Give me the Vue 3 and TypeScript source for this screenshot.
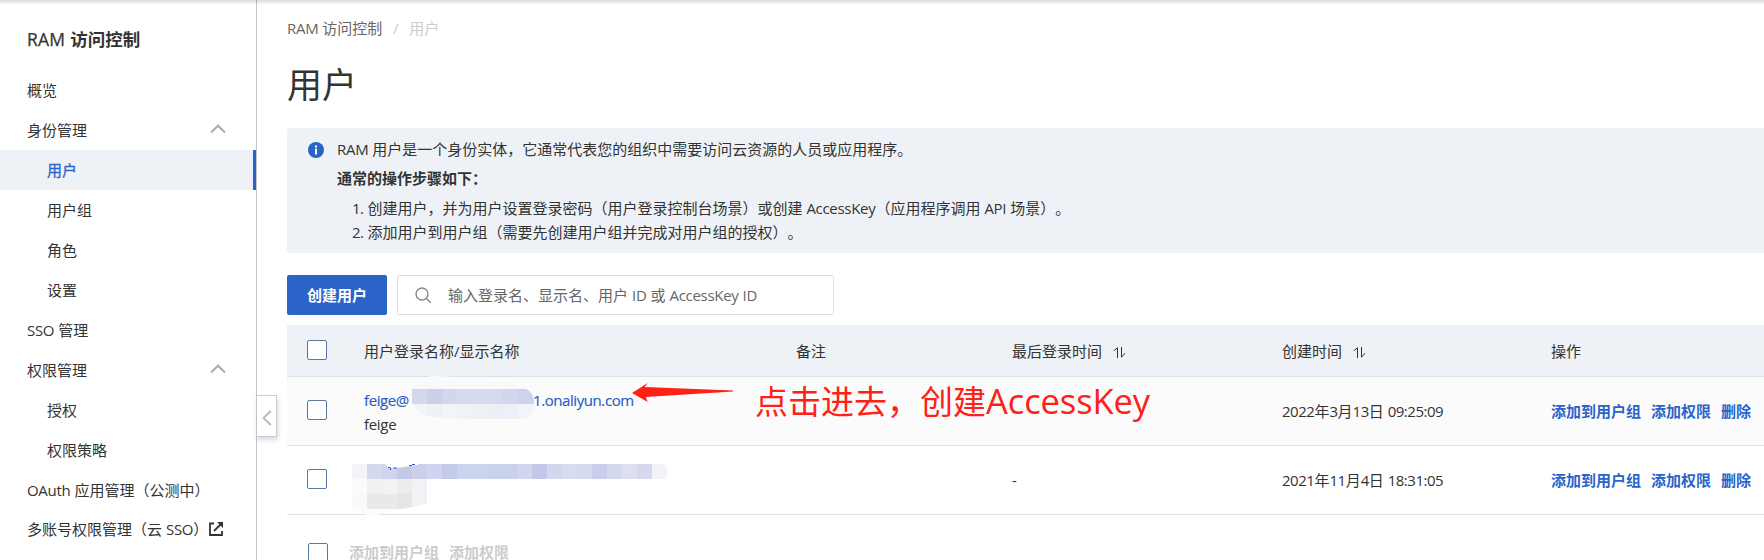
<script setup lang="ts">
import { h } from 'vue'

interface NavItem { label: string; kind: 'top' | 'sub'; open?: boolean; active?: boolean; external?: boolean }
interface Block { x: number; y: number; w: number; h: number; c: string }

const nav: NavItem[] = [
  { label: '概览', kind: 'top' },
  { label: '身份管理', kind: 'top', open: true },
  { label: '用户', kind: 'sub', active: true },
  { label: '用户组', kind: 'sub' },
  { label: '角色', kind: 'sub' },
  { label: '设置', kind: 'sub' },
  { label: 'SSO 管理', kind: 'top' },
  { label: '权限管理', kind: 'top', open: true },
  { label: '授权', kind: 'sub' },
  { label: '权限策略', kind: 'sub' },
  { label: 'OAuth 应用管理（公测中）', kind: 'top' },
  { label: '多账号权限管理（云 SSO）', kind: 'top', external: true },
]

const steps = [
  '创建用户，并为用户设置登录密码（用户登录控制台场景）或创建 AccessKey（应用程序调用 API 场景）。',
  '添加用户到用户组（需要先创建用户组并完成对用户组的授权）。',
]

const rows = [
  { masked: false, last: '-', created: '2022年3月13日 09:25:09' },
  { masked: true, last: '-', created: '2021年11月4日 18:31:05' },
]
const actions = ['添加到用户组', '添加权限', '删除']

const strip = (x: number, y: number, colors: string[]): Block[] =>
  colors.map((c, i) => ({ x: x + i * 15, y, w: 15, h: 15, c }))

const maskA: Block[] = [
  ...strip(0, 13, ['#d3d8ec', '#cbd0ea', '#d2d7ec', '#d5daee', '#d6daee', '#d6daee', '#d2d7ec', '#cdd3ec', '#c8d1ea']),
  ...strip(0, 28, ['#f4f5f9', '#f0f1f7', '#f3f4f8', '#f1f2f8', '#eff0f6', '#eeeff6', '#eff0f7', '#f3f4f9', '#f4f5f9']),
]
const maskB: Block[] = [
  ...strip(0, 0, ['#f4f4f9', '#d4d9ee', '#ced5ee', '#c3cae8', '#ccd1eb', '#cfd5ee', '#c4cbe9', '#cbd3ed', '#cdd5ed', '#c9d1eb', '#c9d1eb', '#d1d5ee', '#c2c9e8', '#d2d6ef', '#d8dcef', '#d6daee', '#c9cfeb', '#d4d8ec', '#dce0f0', '#d5d9ef', '#f2f3f8']),
  ...strip(0, 15, ['#fbfbfb', '#f2f0f0', '#f1f2f1', '#ececea', '#f2f2f6']),
  ...strip(0, 30, ['#faf9f8', '#e9e9ea', '#e8e9ea', '#e5e5e3', '#f1f2f4']),
]

// Latin runs are set slightly tighter than the CJK glyphs around them.
const Mixed = (props: { text: string }) =>
  props.text.split(/([\x20-\x7e]+)/).filter(Boolean).map((part) =>
    /[\x20-\x7e]/.test(part) ? h('span', { class: /[A-Za-z]/.test(part) ? 'latin' : 'latin digits' }, part) : part)
Mixed.props = ['text']
</script>

<template>
  <div class="page">
    <aside class="side">
      <h2 class="side-title"><Mixed text="RAM 访问控制" /></h2>
      <nav>
        <a v-for="item in nav" :key="item.label" class="nav-item" :class="[item.kind, { active: item.active, ext: item.external }]">
          <span><Mixed :text="item.label" /></span>
          <svg v-if="item.open" class="caret" width="16" height="10" viewBox="0 0 16 10"><path d="M1 8.5 8 1.7l7 6.8" /></svg>
          <svg v-if="item.external" class="out" width="14" height="14" viewBox="0 0 14 14">
            <path d="M5 1.5H1v11.5h12V9" /><path d="M5 9 11.5 2.5" /><path class="tip" d="M8 0h6v6z" />
          </svg>
        </a>
      </nav>
      <div class="handle">
        <svg width="10" height="16" viewBox="0 0 10 16"><path d="M8.7 1 1.5 8l7.2 7" /></svg>
      </div>
    </aside>

    <main class="main">
      <div class="crumbs"><span><Mixed text="RAM 访问控制" /></span><i>/</i><span class="here">用户</span></div>
      <h1>用户</h1>

      <section class="notice">
        <svg class="info" width="16" height="16" viewBox="0 0 16 16">
          <circle cx="8" cy="8" r="8" /><rect x="7" y="3.5" width="2" height="2" /><rect x="7" y="6.7" width="2" height="5.8" />
        </svg>
        <div>
          <p><Mixed text="RAM 用户是一个身份实体，它通常代表您的组织中需要访问云资源的人员或应用程序。" /></p>
          <p class="strong">通常的操作步骤如下：</p>
          <div class="steps">
            <div v-for="(s, i) in steps" :key="i"><Mixed :text="`${i + 1}. ${s}`" /></div>
          </div>
        </div>
      </section>

      <div class="toolbar">
        <button class="primary">创建用户</button>
        <div class="search">
          <svg width="17" height="17" viewBox="0 0 17 17"><circle cx="7" cy="7" r="6" /><path d="m11.4 11.4 4.3 4.3" /></svg>
          <span><Mixed text="输入登录名、显示名、用户 ID 或 AccessKey ID" /></span>
        </div>
      </div>

      <div class="table">
        <div class="row head">
          <div><span class="box" /></div>
          <div>用户登录名称/显示名称</div>
          <div>备注</div>
          <div v-for="t in ['最后登录时间', '创建时间']" :key="t">{{ t }}<svg class="sort" width="13" height="11" viewBox="0 0 13 11"><path d="M.8 3.8 4.5.8V11M8.5 0v10.2l3.5-4" /></svg></div>
          <div>操作</div>
        </div>
        <div v-for="(r, i) in rows" :key="i" class="row" :class="{ hover: i === 0 }">
          <div><span class="box" /></div>
          <div class="name">
            <template v-if="!r.masked">
              <div class="link"><span class="latin user">feige@</span><span class="latin">1.onaliyun.com</span></div>
              <div class="latin">feige</div>
              <svg class="mask a" width="122" height="44" viewBox="0 0 122 44">
                <defs><clipPath id="ca"><path d="M0 13Q5 2 20 0Q45 0 58 4Q105 5 114 13Q122 16 122 28Q122 38 115 43H45Q25 42 16 40Q3 36 0 27Z" /></clipPath></defs>
                <g clip-path="url(#ca)"><rect width="122" height="44" fill="#f8f9fb" /><rect v-for="(b, k) in maskA" :key="k" :x="b.x" :y="b.y" :width="b.w" :height="b.h" :fill="b.c" /></g>
              </svg>
            </template>
            <svg v-else class="mask b" width="315" height="52" viewBox="0 0 315 52">
              <defs><clipPath id="cb"><path d="M0 0H33L38 5 66 1V0H311L315 4V15H75V40L50 45 25 51H15L0 45Z" /></clipPath></defs>
              <g clip-path="url(#cb)"><rect y="45" width="75" height="7" fill="#fbfbfb" /><rect v-for="(b, k) in maskB" :key="k" :x="b.x" :y="b.y" :width="b.w" :height="b.h" :fill="b.c" /></g>
              <path class="trace" d="M36 3.5h2M38.5 3.5v2.5M41 4h4M57 1.5h3M60 .5h3" />
            </svg>
          </div>
          <div />
          <div>{{ r.last }}</div>
          <div><Mixed :text="r.created" /></div>
          <div class="acts"><a v-for="a in actions" :key="a">{{ a }}</a></div>
        </div>
        <div class="foot"><span class="box" /><a>添加到用户组</a><a>添加权限</a></div>
      </div>
    </main>

    <div class="note"><Mixed text="点击进去，创建AccessKey" /></div>
    <svg class="arrow" width="102" height="20" viewBox="0 0 104 20" preserveAspectRatio="none"><path d="M0 10 16 0 13 4 103 7.5V8.5L14 14 16 19Z" /></svg>
    <div class="shade" />
  </div>
</template>

<style>
body { margin: 0; overflow: hidden; }
.latin { letter-spacing: -0.3px; word-spacing: 0.4px; white-space: pre; }
.latin.digits { letter-spacing: -0.47px; }
.link .latin { letter-spacing: -0.42px; }
.note .latin { font-size: 34.5px; letter-spacing: -0.1px; }
</style>

<style scoped>
* { box-sizing: border-box; }
.page { position: relative; display: flex; width: 1764px; height: 560px; overflow: hidden; background: #fff; color: #333; font: 15px/20px "Open Sans", "Noto Sans CJK SC", sans-serif; white-space: nowrap; text-spacing-trim: space-all; }
h1, h2, p { margin: 0; }
svg { fill: none; }
.shade { position: absolute; inset: 0 0 auto; height: 5px; background: linear-gradient(rgba(0,0,0,.14), rgba(0,0,0,0)); }
.side { position: relative; flex: none; width: 257px; height: 560px; border-right: 1px solid #c0c4cf; padding-top: 24px; }
.side-title { height: 46px; padding-left: 27px; font-size: 17.5px; line-height: 31px; font-weight: 600; }
.side-title :deep(.latin) { font-weight: 500; letter-spacing: 0.2px; -webkit-text-stroke: 0.25px; }
.nav-item { display: flex; align-items: center; height: 40px; padding-left: 27px; }
.nav-item.sub { padding-left: 47px; }
.nav-item.active { background: #eef2f7; color: #2a64c9; border-right: 3px solid #2a64c9; -webkit-text-stroke: 0.3px; }
.nav-item.ext { height: 38px; }
.caret { margin-left: auto; margin-right: 30px; margin-top: -2px; stroke: #aaa; stroke-width: 2; }
.out { margin-left: 1px; stroke: #333; stroke-width: 1.8; }
.out .tip { fill: #333; stroke: none; }
.handle { position: absolute; left: 256px; top: 395px; width: 21px; height: 42px; display: flex; align-items: center; justify-content: center; background: #fff; border: 1px solid #c9ccd4; border-left-color: #c0c4cf; box-shadow: 1px 3px 5px rgba(0,0,0,.15); padding-top: 3px; }
.handle svg { stroke: #bbb; stroke-width: 2; }
.main { flex: 1; padding: 18px 0 0 30px; min-width: 0; }
.crumbs { display: flex; color: #666; }
.crumbs i { width: 27px; text-align: center; color: #ccc; font-style: normal; }
.crumbs .here { color: #ccc; }
h1 { margin-top: 22px; height: 68px; font-size: 35px; line-height: 50px; font-weight: 400; }
.notice { display: flex; height: 125px; padding: 11px 0 0 21px; background: #eef2f7; border-radius: 3px 0 0 3px; }
.info { flex: none; margin: 3px 13px 0 0; fill: #2a64c9; }
.info rect { fill: #fff; }
.notice .strong { margin-top: 9px; font-weight: 600; }
.steps { margin: 8px 0 0 15px; line-height: 24px; }
.toolbar { display: flex; gap: 10px; margin-top: 22px; }
.primary { width: 100px; height: 40px; padding: 0; border: 0; border-radius: 2px; background: #2a64c9; color: #fff; font: inherit; font-weight: 600; }
.search { display: flex; align-items: center; width: 437px; height: 40px; padding-left: 17px; border: 1px solid #dedfe1; border-radius: 2px; color: #666; }
.search svg { margin-right: 16px; stroke: #888; stroke-width: 1.4; }
.table { margin-top: 10px; }
.row { display: grid; grid-template-columns: 77px 432px 216px 270px 269px 1fr; align-items: center; height: 69px; border-bottom: 1px solid #dfe0e3; }
.row.head { height: 52px; background: #eef2f7; }
.row.hover { background: #fbfbfb; }
.box { display: block; width: 20px; height: 20px; margin-left: 20px; border: 1px solid #5a77a0; border-radius: 2px; background: #fff; }
.row.head .box { margin-top: -2px; }
.row .box { margin-top: -3px; }
.sort { margin-left: 11px; stroke: #333; stroke-width: 1; vertical-align: -1px; }
.name { position: relative; line-height: 24px; height: 48px; padding-top: 1px; }
.link { display: flex; color: #2a5cc6; -webkit-text-stroke: 0.15px; }
.user { width: 169px; }
.mask { position: absolute; }
.mask.a { left: 48px; top: -11px; }
.mask.b { left: -12px; top: 8px; }
.trace { stroke: #3058c0; stroke-width: 1.2; }
.acts { display: flex; gap: 10px; color: #2a64c9; font-weight: 600; }
.foot { display: flex; gap: 10px; padding: 27px 0 0 1px; color: #ccc; font-weight: 600; }
.foot .box { margin: 1px 11px 0 20px; }
.note { position: absolute; left: 755px; top: 379px; color: #ff2016; font-size: 33px; line-height: 44px; }
.arrow { position: absolute; left: 632px; top: 383px; fill: #ff2016; }
</style>
